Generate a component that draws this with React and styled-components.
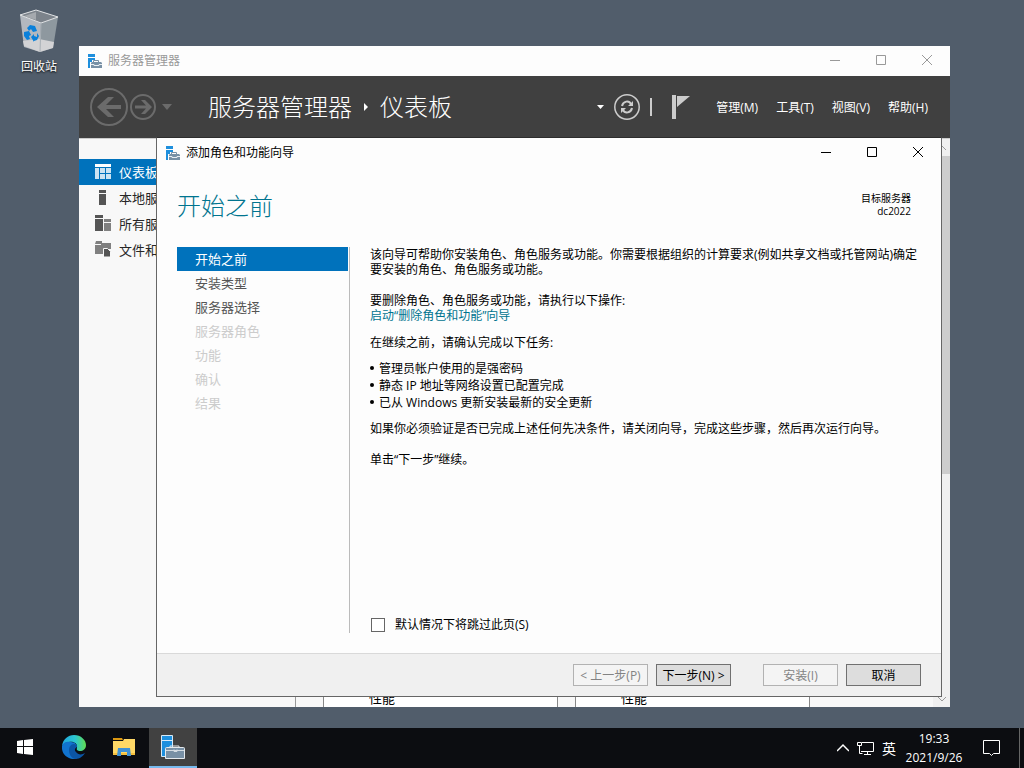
import React, { useState } from "react";
import styled, { createGlobalStyle } from "styled-components";

const GlobalStyle = createGlobalStyle`
    * {
        box-sizing: border-box;
    }

    body {
        margin: 0;
        font-family: "Open Sans", "Noto Sans CJK SC", sans-serif;
        font-size: 12px;
        color: #000;
    }

    button {
        font: inherit;
        color: inherit;
        cursor: pointer;
    }

    svg {
        display: block;
        flex: none;
    }
`;

const Screen = styled.div`
    display: flex;
    flex-direction: column;
    height: 100vh;
    overflow: hidden;
    background: #515d6b;
`;

const Workspace = styled.main`
    position: relative;
    flex: 1;
    min-height: 0;
`;

const DesktopIcon = styled.button`
    display: flex;
    flex-direction: column;
    align-items: center;
    gap: 4px;
    width: 78px;
    padding: 8px 0 0;
    border: none;
    background: none;
    color: #fff;
    line-height: 18px;
    text-shadow: 0 1px 2px #000;
`;

const Window = styled.section`
    position: absolute;
    display: flex;
    flex-direction: column;
    overflow: hidden;
`;

const ManagerWindow = styled(Window)`
    top: 46px;
    right: 74px;
    bottom: 21px;
    left: 79px;
    background: #fff;
`;

const WizardWindow = styled(Window)`
    top: 137px;
    right: 82px;
    bottom: 31px;
    left: 156px;
    border: 1px solid #666;
    border-top-color: #2d2d2d;
    background: #fdfdfd;
`;

const TitleBar = styled.header`
    display: flex;
    align-items: center;
    gap: 6px;
    height: 30px;
    padding-left: 8px;
    background: #fdfdfd;
    color: ${(props) => (props.$active ? "#000" : "#999")};
`;

const TitleText = styled.span`
    flex: 1;
    line-height: 18px;
`;

const WindowButtons = styled.div`
    display: flex;
    align-self: flex-start;
`;

const WindowButton = styled.button`
    display: flex;
    align-items: center;
    justify-content: center;
    width: 46px;
    height: 28px;
    padding: 0;
    border: none;
    background: none;

    &:hover {
        background: #e5e5e5;
    }
`;

const Banner = styled.div`
    display: flex;
    align-items: center;
    height: 62px;
    padding: 0 14px 0 11px;
    background: #404040;
    color: #fff;
`;

const BannerButton = styled.button`
    display: flex;
    padding: 0 0 0 ${(props) => (props.$inset ? 4 : 0)}px;
    border: none;
    background: none;
`;

const History = styled.div`
    display: flex;
    align-items: center;
    gap: 2px;
`;

const Breadcrumb = styled.h1`
    display: flex;
    align-items: center;
    gap: 11px;
    flex: 1;
    margin: 0 0 0 36px;
    font-size: 24px;
    font-weight: 300;
    line-height: 36px;
`;

const BannerTools = styled.div`
    display: flex;
    align-items: center;
    gap: 10px;
`;

const Separator = styled.span`
    width: 2px;
    height: 18px;
    margin-right: 10px;
    background: #ccc;
`;

const MenuBar = styled.nav`
    display: flex;
    gap: 2px;
    margin-left: 18px;
`;

const MenuButton = styled.button`
    padding: 1px 8px 0;
    border: none;
    background: none;
    line-height: 18px;
`;

const ManagerBody = styled.div`
    display: flex;
    flex: 1;
    min-height: 0;
    border-top: 1px solid #ccc;
`;

const Sidebar = styled.nav`
    width: 216px;
    padding-top: 20px;
    background: #f8f8f8;
`;

const SidebarItem = styled.button`
    display: flex;
    align-items: center;
    gap: 8px;
    width: 100%;
    height: 26px;
    padding: 0 0 2px 16px;
    border: none;
    background: ${(props) => (props.$selected ? "#0072bc" : "none")};
    color: ${(props) => (props.$selected ? "#fff" : "#262626")};
    font-size: 13px;
    text-align: left;
    white-space: nowrap;
`;

const Tiles = styled.div`
    display: flex;
    align-items: flex-end;
    gap: 17px;
    flex: 1;
    padding-left: 27px;
    border-left: 1px solid #999;
    background: #f8f8f8;
`;

const Tile = styled.div`
    width: 235px;
    padding-left: 45px;
    border: solid #888;
    border-width: 0 1px;
    background: #fff;
    font-size: 13px;
    line-height: 18px;
`;

const ScrollTrack = styled.div`
    display: flex;
    flex-direction: column;
    align-items: center;
    width: 17px;
    background: #f0f0f0;
    color: #999;
`;

const ScrollButton = styled.button`
    display: flex;
    align-items: center;
    justify-content: center;
    width: 17px;
    height: 17px;
    padding: 0;
    border: none;
    background: none;
`;

const ScrollThumb = styled.div`
    width: 17px;
    height: 56%;
    margin-bottom: auto;
    background: #cdcdcd;
`;

const WizardHead = styled.div`
    display: flex;
    justify-content: space-between;
    align-items: flex-start;
    padding: 20px 30px 0 20px;
`;

const WizardTitle = styled.h2`
    margin: 0;
    color: #00748f;
    font-size: 24px;
    font-weight: 300;
    line-height: 36px;
`;

const Target = styled.div`
    padding-top: 4px;
    font-size: 10px;
    line-height: 13px;
    text-align: right;
`;

const WizardBody = styled.div`
    display: flex;
    flex: 1;
    min-height: 0;
    padding: 23px 20px 20px;
`;

const Steps = styled.nav`
    width: 173px;
    padding-right: 1px;
    border-right: 1px solid #bbb;
`;

const Step = styled.button`
    display: block;
    width: 100%;
    height: 24px;
    padding: 0 0 0 18px;
    border: none;
    background: ${(props) => (props.$selected ? "#0072bc" : "none")};
    color: ${(props) => (props.$selected ? "#fff" : "#555")};
    font-size: 13px;
    line-height: 24px;
    text-align: left;

    &:disabled {
        color: #ccc;
        cursor: default;
    }
`;

const Content = styled.div`
    display: flex;
    flex-direction: column;
    flex: 1;
    padding-left: 20px;
`;

const Paragraph = styled.p`
    margin: 0 0 ${(props) => props.$gap || 12}px;
    line-height: 15px;
`;

const Link = styled.a`
    color: #00748f;
    text-decoration: none;
`;

const TaskList = styled.ul`
    margin: 0 0 10px;
    padding: 0;
    list-style: none;
`;

const Task = styled.li`
    display: flex;
    align-items: flex-start;
    gap: 5px;
    line-height: 17px;

    &::before {
        content: "";
        width: 4px;
        height: 4px;
        margin-top: 6px;
        border-radius: 50%;
        background: #000;
    }
`;

const SkipLabel = styled.label`
    display: flex;
    align-items: center;
    gap: 10px;
    margin-top: auto;
    padding-left: 1px;
    line-height: 16px;
`;

const Checkbox = styled.input`
    appearance: none;
    width: 14px;
    height: 14px;
    margin: 0;
    border: 1px solid #666;
    background: #fff;

    &:checked {
        background: #0072bc;
        box-shadow: inset 0 0 0 2px #fff;
    }
`;

const WizardFooter = styled.footer`
    display: flex;
    justify-content: flex-end;
    gap: 8px;
    height: 43px;
    padding: 10px 20px 0;
    border-top: 1px solid #d9d9d9;
    background: #f0f0f0;
`;

const FooterButton = styled.button`
    width: 75px;
    height: 22px;
    margin-left: ${(props) => (props.$apart ? 24 : 0)}px;
    padding: 1px 0 0;
    border: 1px solid #707070;
    background: #ddd;
    line-height: 18px;
    white-space: nowrap;

    &:disabled {
        border-color: #b2b2b2;
        background: #f4f4f4;
        color: #838383;
        cursor: default;
    }
`;

const Taskbar = styled.footer`
    display: flex;
    height: 40px;
    background: #0c0d11;
    color: #fff;
`;

const TaskButton = styled.button`
    display: flex;
    align-items: center;
    justify-content: center;
    width: ${(props) => props.$width || 50}px;
    padding: 0;
    border: none;
    border-bottom: 2px solid ${(props) => (props.$active ? "#76b9ed" : "transparent")};
    background: ${(props) => (props.$active ? "#414141" : "none")};
`;

const Tray = styled.div`
    display: flex;
    align-items: center;
    gap: 8px;
    margin-left: auto;
`;

const TrayButton = styled.button`
    display: flex;
    padding: 0 ${(props) => (props.$wide ? 11 : 0)}px;
    border: none;
    background: none;
    font-size: ${(props) => (props.$text ? 14 : 12)}px;
`;

const Clock = styled.time`
    min-width: 60px;
    text-align: center;
    line-height: 19px;
`;

const ShowDesktop = styled.button`
    align-self: stretch;
    width: 5px;
    padding: 0;
    border: none;
    border-left: 1px solid #666;
    background: none;
`;

const RecycleBinIcon = () => (
    <svg width="40" height="46" viewBox="0 0 40 46">
        <path d="M1 7 22 15 21 44 5 39Z" fill="#b3b8bf" />
        <path d="M22 15 39 9 34 40 21 44Z" fill="#8e989f" />
        <path d="M5 38 4 33 20 31 35 34 34 40 21 44Z" fill="#d3d3d5" />
        <path d="M1 7 17 2 39 9 22 15Z" fill="#7c838b" />
        <path d="m5 8 12-4v8z" fill="#a5a9ae" />
        <path d="M1 7 17 2 39 9 22 15Z" fill="none" stroke="#e2e4e6" />
        <path d="M22 15 21 44" fill="none" stroke="#a9b0b6" />
        <path
            d="m8 20 3-3 5 1 2 5-4 1-2-3-2 2zM5 24l5-1 2 4-2 1 1 3-3 1-3-4zM12 29l3-3v2l3 1 0-4 2 3-2 4-3 1v1z"
            fill="#0a80da"
        />
    </svg>
);

const ServerIcon = () => (
    <svg width="15" height="15" viewBox="0 0 15 15">
        <path d="M1 0h7v3H1zM1 4h7v2H5v2H3v6H1z" fill="#1e8fdd" />
        <path d="M6.500 8V6.500h5V8" fill="none" stroke="#7890a5" />
        <path d="M4 9l1-1h9l1 1v5H4z" fill="#7890a5" />
        <path d="M4 10.500h3v1h5v-1h3" fill="none" stroke="#e8eef3" />
    </svg>
);

const MinimizeIcon = () => (
    <svg width="10" height="10" viewBox="0 0 10 10">
        <path d="M0 5.5h10" stroke="currentColor" />
    </svg>
);

const MaximizeIcon = () => (
    <svg width="10" height="10" viewBox="0 0 10 10">
        <path d="M.5.5h9v9h-9z" fill="none" stroke="currentColor" />
    </svg>
);

const CloseIcon = () => (
    <svg width="10" height="10" viewBox="0 0 10 10">
        <path d="m0 0 10 10M10 0 0 10" stroke="currentColor" />
    </svg>
);

const BackIcon = () => (
    <svg width="38" height="38" viewBox="0 0 38 38">
        <circle cx="19" cy="19" r="18" fill="none" stroke="#6b6b6b" strokeWidth="2" />
        <path d="M7 19 18 9h6l-8 8h15v4H16l8 8h-6z" fill="#6b6b6b" />
    </svg>
);

const ForwardIcon = () => (
    <svg width="26" height="26" viewBox="0 0 26 26">
        <circle cx="13" cy="13" r="12" fill="none" stroke="#6b6b6b" strokeWidth="2" />
        <path d="m22 13-7 7h-4l5-5.500H5v-3h11L11 6h4z" fill="#6b6b6b" />
    </svg>
);

const Triangle = ({ width, height, color }) => (
    <svg width={width} height={height} viewBox="0 0 12 6" preserveAspectRatio="none">
        <path d="M0 0h12L6 6z" fill={color} />
    </svg>
);

const CrumbArrow = () => (
    <svg width="6" height="10" viewBox="0 0 6 10">
        <path d="m1 1 4 4-4 4z" fill="#fff" />
    </svg>
);

const RefreshIcon = () => (
    <svg width="26" height="26" viewBox="0 0 26 26" fill="none" stroke="#ccc">
        <circle cx="13" cy="13" r="12.200" strokeWidth="1.500" />
        <path d="M8 12c1-5 7-6 9-2M18 14c-1 5-7 6-9 2" strokeWidth="2" />
        <path d="M19 7v5h-5zM7 19v-5h5z" fill="#ccc" stroke="none" />
    </svg>
);

const FlagIcon = () => (
    <svg width="18" height="25" viewBox="0 0 18 25">
        <path d="M0 0h4v24H0zM5 1h13L5 12z" fill="#ccc" />
    </svg>
);

const sideIcons = {
    dashboard: (
        <>
            <path d="M0 1h16v3H0z" fill="#fff" />
            <path d="M0 5h4v11H0zM5 5h5v5H5zM11 5h5v5h-5zM5 11h5v5H5zM11 11h5v5h-5z" fill="#cce3f2" />
        </>
    ),
    local: <path d="M4 1h7v3H4zM4 5h7v11H4z" fill="#555" />,
    all: (
        <>
            <path d="M0 0h8v3H0zM0 4h8v12H0z" fill="#555" />
            <path d="M9 4h7v3H9zM9 8h7v8H9z" fill="#808080" />
        </>
    ),
    files: (
        <>
            <path d="M1 0h6v2h9v6H8v5H0V4h6V3H0z" fill="#808080" />
            <path d="M8.500 7.500h4l3 3V16h-7z" fill="#555" stroke="#f8f8f8" />
        </>
    ),
};

const SideIcon = ({ name }) => (
    <svg width="16" height="16" viewBox="0 0 16 16">
        {sideIcons[name]}
    </svg>
);

const Chevron = ({ up, size = 8 }) => (
    <svg width={size} height={size} viewBox="0 0 8 8" fill="none" stroke="currentColor">
        <path d={up ? "m0 6 4-4 4 4" : "m0 2 4 4 4-4"} />
    </svg>
);

const StartIcon = () => (
    <svg width="16" height="16" viewBox="0 0 16 16">
        <path d="M0 2 6 1v6H0zM7 1l9-1v7H7zM0 8h6v7l-6-1zM7 8h9v8l-9-1z" fill="#fff" />
    </svg>
);

const EdgeIcon = () => (
    <svg width="24" height="24" viewBox="0 0 24 24">
        <defs>
            <linearGradient id="edgeTop" x1="0" y1="0" x2="1" y2="0">
                <stop offset="0" stopColor="#1ea5e0" />
                <stop offset=".55" stopColor="#2cc6d0" />
                <stop offset="1" stopColor="#61dc50" />
            </linearGradient>
        </defs>
        <path d="M0 11C1 4 6 0 12 0c7 0 12 5 12 10 0 4-3 6-6 6-2 0-4-1-3-3 1-5-4-7-8-6-3 0-6 2-7 4z" fill="url(#edgeTop)" />
        <path d="M0 11c1-4 6-5 9-4 4 0 6 3 6 5-2-2-6 0-6 4 0 3 3 7 6 8C7 25-1 20 0 11z" fill="#1173cf" />
        <path d="M7 15c0-3 2-6 5-6 2 0 3 1 3 3-2 1-3 3-1 5 2 3 6 3 9 1-3 5-7 6-10 6-4-1-6-5-6-9z" fill="#0b55a5" />
    </svg>
);

const FolderIcon = () => (
    <svg width="22" height="18" viewBox="0 0 22 18">
        <path d="M0 0h9l1 2H0z" fill="#dc9812" />
        <path d="M0 3h10l1-2h11v16H0z" fill="#ffd866" />
        <path d="M0 15h22v2H0z" fill="#f5bf3d" />
        <path d="m4 18 1-8h12l1 8h-4v-4H8v4z" fill="#3f91d5" />
    </svg>
);

const ManagerTaskIcon = () => (
    <svg width="24" height="24" viewBox="0 0 24 24" strokeLinejoin="round">
        <path d="M.5.5h11v21H.5z" fill="#1e8fdd" stroke="#d7eaf8" />
        <path d="M1 5.5h10" stroke="#d7eaf8" />
        <path d="M9 13v-2h9v2" fill="none" stroke="#e4e9ed" />
        <path d="M4.500 13.500q0-1 1-1h17q1 0 1 1v10h-19z" fill="#7890a5" stroke="#e4e9ed" />
        <path d="M5 15.500h18M13 14.500v2h3v-2" fill="none" stroke="#d3dbe2" />
    </svg>
);

const NetworkIcon = () => (
    <svg width="17" height="15" viewBox="0 0 17 15" fill="none" stroke="#fff">
        <path d="M5 1.500h11.500v9H4M10.500 10.500v3M7 13.500h7M.5 1.500h4v3h-4zM2.500 4.500v8h3" />
    </svg>
);

const MessageIcon = () => (
    <svg width="17" height="17" viewBox="0 0 17 17" fill="none" stroke="#fff">
        <path d="M.5.500h16v13h-6l-2 2-2-2h-6z" />
    </svg>
);

const sidebarItems = [
    { icon: "dashboard", label: "仪表板" },
    { icon: "local", label: "本地服" },
    { icon: "all", label: "所有服" },
    { icon: "files", label: "文件和" },
];

const steps = [
    { label: "开始之前" },
    { label: "安装类型" },
    { label: "服务器选择" },
    { label: "服务器角色", disabled: true },
    { label: "功能", disabled: true },
    { label: "确认", disabled: true },
    { label: "结果", disabled: true },
];

const tasks = [
    "管理员帐户使用的是强密码",
    "静态 IP 地址等网络设置已配置完成",
    "已从 Windows 更新安装最新的安全更新",
];

const menus = ["管理(M)", "工具(T)", "视图(V)", "帮助(H)"];

const WindowTitle = ({ title, active }) => (
    <TitleBar $active={active}>
        <ServerIcon />
        <TitleText>{title}</TitleText>
        <WindowButtons>
            <WindowButton aria-label="最小化">
                <MinimizeIcon />
            </WindowButton>
            <WindowButton aria-label="最大化">
                <MaximizeIcon />
            </WindowButton>
            <WindowButton aria-label="关闭">
                <CloseIcon />
            </WindowButton>
        </WindowButtons>
    </TitleBar>
);

const ServerManager = () => (
    <ManagerWindow>
        <WindowTitle title="服务器管理器" />
        <Banner>
            <History>
                <BannerButton aria-label="后退">
                    <BackIcon />
                </BannerButton>
                <BannerButton aria-label="前进">
                    <ForwardIcon />
                </BannerButton>
                <BannerButton aria-label="历史记录" $inset>
                    <Triangle width={10} height={6} color="#6b6b6b" />
                </BannerButton>
            </History>
            <Breadcrumb>
                <span>服务器管理器</span>
                <CrumbArrow />
                <span>仪表板</span>
            </Breadcrumb>
            <BannerTools>
                <Triangle width={7} height={4} color="#fff" />
                <BannerButton aria-label="刷新">
                    <RefreshIcon />
                </BannerButton>
                <Separator />
                <BannerButton aria-label="通知">
                    <FlagIcon />
                </BannerButton>
            </BannerTools>
            <MenuBar>
                {menus.map((menu) => (
                    <MenuButton key={menu}>{menu}</MenuButton>
                ))}
            </MenuBar>
        </Banner>
        <ManagerBody>
            <Sidebar>
                {sidebarItems.map((item, index) => (
                    <SidebarItem key={item.icon} $selected={index === 0}>
                        <SideIcon name={item.icon} />
                        {item.label}
                    </SidebarItem>
                ))}
            </Sidebar>
            <Tiles>
                <Tile>性能</Tile>
                <Tile>性能</Tile>
            </Tiles>
            <ScrollTrack>
                <ScrollButton aria-label="向上滚动">
                    <Chevron up />
                </ScrollButton>
                <ScrollThumb />
                <ScrollButton aria-label="向下滚动">
                    <Chevron />
                </ScrollButton>
            </ScrollTrack>
        </ManagerBody>
    </ManagerWindow>
);

const Wizard = () => {
    const [step, setStep] = useState(0);
    const [skip, setSkip] = useState(false);

    return (
        <WizardWindow>
            <WindowTitle title="添加角色和功能向导" active />
            <WizardHead>
                <WizardTitle>开始之前</WizardTitle>
                <Target>
                    <div>目标服务器</div>
                    <div>dc2022</div>
                </Target>
            </WizardHead>
            <WizardBody>
                <Steps>
                    {steps.map((item, index) => (
                        <Step
                            key={item.label}
                            $selected={index === step}
                            disabled={item.disabled}
                            onClick={() => setStep(index)}
                        >
                            {item.label}
                        </Step>
                    ))}
                </Steps>
                <Content>
                    <Paragraph $gap={16}>
                        该向导可帮助你安装角色、角色服务或功能。你需要根据组织的计算要求(例如共享文档或托管网站)确定要安装的角色、角色服务或功能。
                    </Paragraph>
                    <Paragraph>
                        要删除角色、角色服务或功能，请执行以下操作:
                        <br />
                        <Link href="#remove">启动“删除角色和功能”向导</Link>
                    </Paragraph>
                    <Paragraph $gap={10}>在继续之前，请确认完成以下任务:</Paragraph>
                    <TaskList>
                        {tasks.map((task) => (
                            <Task key={task}>{task}</Task>
                        ))}
                    </TaskList>
                    <Paragraph $gap={16}>
                        如果你必须验证是否已完成上述任何先决条件，请关闭向导，完成这些步骤，然后再次运行向导。
                    </Paragraph>
                    <Paragraph>单击“下一步”继续。</Paragraph>
                    <SkipLabel>
                        <Checkbox
                            type="checkbox"
                            checked={skip}
                            onChange={(e) => setSkip(e.target.checked)}
                        />
                        默认情况下将跳过此页(S)
                    </SkipLabel>
                </Content>
            </WizardBody>
            <WizardFooter>
                <FooterButton disabled>&lt; 上一步(P)</FooterButton>
                <FooterButton onClick={() => setStep(Math.min(step + 1, 2))}>
                    下一步(N) &gt;
                </FooterButton>
                <FooterButton disabled $apart>
                    安装(I)
                </FooterButton>
                <FooterButton>取消</FooterButton>
            </WizardFooter>
        </WizardWindow>
    );
};

const App = () => (
    <>
        <GlobalStyle />
        <Screen>
            <Workspace>
                <DesktopIcon>
                    <RecycleBinIcon />
                    回收站
                </DesktopIcon>
                <ServerManager />
                <Wizard />
            </Workspace>
            <Taskbar>
                <TaskButton aria-label="开始" $width={49}>
                    <StartIcon />
                </TaskButton>
                <TaskButton aria-label="Microsoft Edge">
                    <EdgeIcon />
                </TaskButton>
                <TaskButton aria-label="文件资源管理器">
                    <FolderIcon />
                </TaskButton>
                <TaskButton aria-label="服务器管理器" $width={48} $active>
                    <ManagerTaskIcon />
                </TaskButton>
                <Tray>
                    <TrayButton aria-label="显示隐藏的图标">
                        <Chevron up size={12} />
                    </TrayButton>
                    <TrayButton aria-label="网络">
                        <NetworkIcon />
                    </TrayButton>
                    <TrayButton $text>英</TrayButton>
                    <Clock>
                        19:33
                        <br />
                        2021/9/26
                    </Clock>
                    <TrayButton aria-label="通知中心" $wide>
                        <MessageIcon />
                    </TrayButton>
                    <ShowDesktop aria-label="显示桌面" />
                </Tray>
            </Taskbar>
        </Screen>
    </>
);

export default App;
